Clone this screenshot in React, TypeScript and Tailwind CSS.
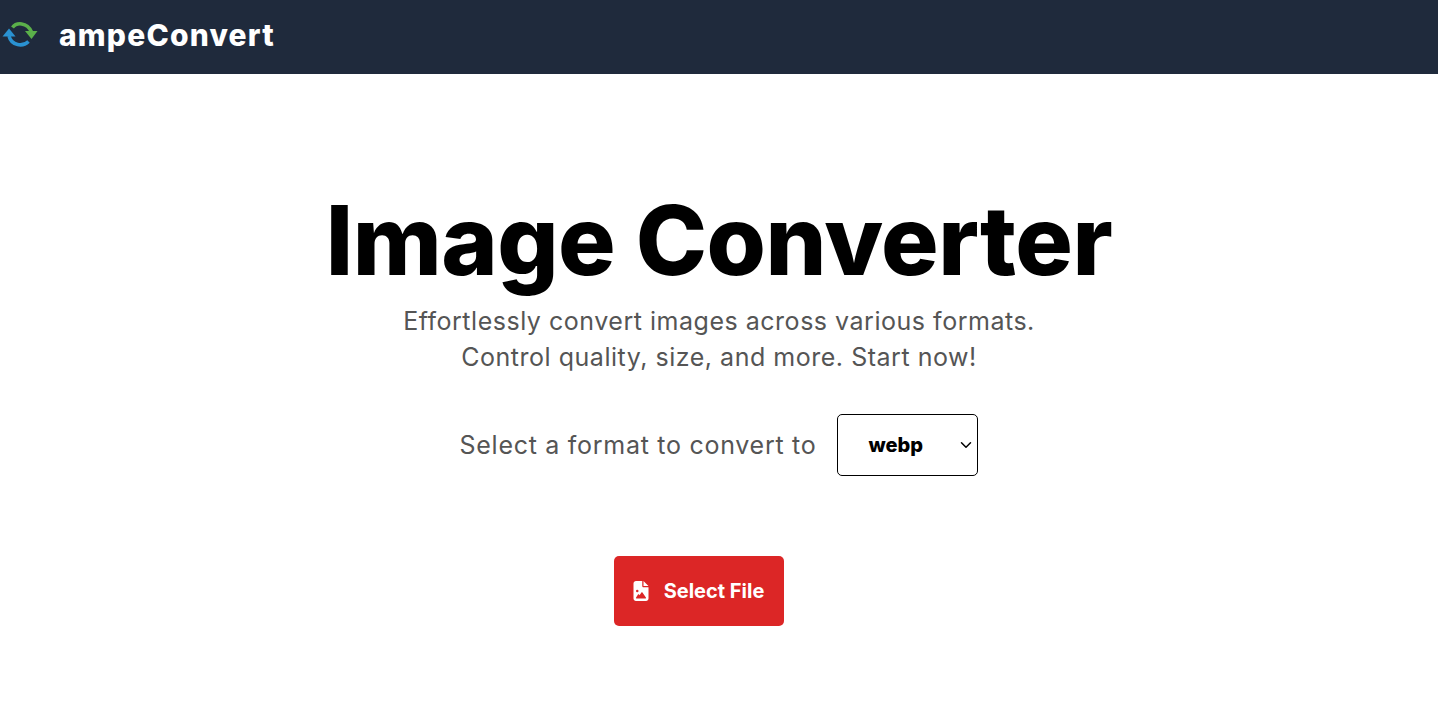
import { FaFileImage } from "react-icons/fa6";
import { ChevronDown } from "lucide-react";

const font = { fontFamily: "Inter, 'Noto Sans', sans-serif" };

function Logo() {
  return (
    <svg width="36" height="26" viewBox="0 0 36 26" className="shrink-0 mb-[6px]" fill="none">
      <path d="M10.500 6.500 C14 1.500 25 0.500 29.500 11" stroke="#5bb04a" strokeWidth="3.500" />
      <path d="M23 10 H35.500 L29.500 18 Z" fill="#5bb04a" />
      <path d="M7 15 C9.500 25 21 26 26.500 20.500" stroke="#2a92d2" strokeWidth="3.500" />
      <path d="M0.500 15.500 L7 7.500 L13.500 15.500 Z" fill="#2a92d2" />
    </svg>
  );
}

export default function App() {
  return (
    <div className="min-h-[724px] bg-white flex flex-col" style={font}>
      <header className="h-[74px] bg-[#1f2a3c] flex items-center pl-[2px] gap-[21px]">
        <Logo />
        <span className="text-white font-extrabold text-[30px] leading-none tracking-[1.2px] mb-[5px]">ampeConvert</span>
      </header>
      <main className="flex flex-col items-center">
        <h1 className="mt-[110px] text-black font-extrabold text-[96px] leading-[112px] tracking-[-0.5px]">Image Converter</h1>
        <p className="mt-[7px] text-[#555] text-[25px] leading-[36px] tracking-[0.52px] text-center">
          Effortlessly convert images across various formats.
          <br />
          Control quality, size, and more. Start now!
        </p>
        <div className="mt-[39px] flex items-center gap-[21px]">
          <span className="text-[#555] text-[25px] tracking-[0.72px] mt-[1px]">Select a format to convert to</span>
          <div className="relative w-[141px] h-[62px]">
            <select
              defaultValue="webp"
              className="appearance-none w-full h-full pl-[30px] bg-white border border-black rounded-[5px] text-black font-extrabold text-[20px]"
            >
              <option>webp</option>
              <option>png</option>
              <option>jpeg</option>
            </select>
            <ChevronDown size={18} strokeWidth={2} className="absolute right-[3px] top-[22px] text-black pointer-events-none" />
          </div>
        </div>
        <button className="mt-[80px] mr-[41px] pr-[2px] w-[170px] h-[70px] bg-[#dc2626] rounded-[5px] text-white font-bold text-[20px] flex items-center justify-center gap-[13px]">
          <FaFileImage className="text-[20px]" />
          Select File
        </button>
      </main>
    </div>
  );
}
